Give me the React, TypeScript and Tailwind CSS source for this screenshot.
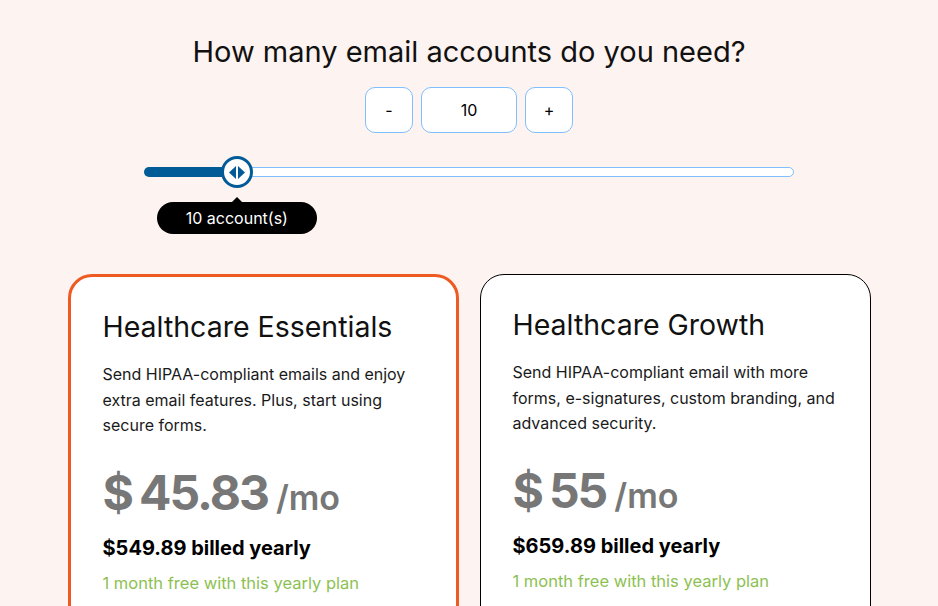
import { useState } from 'react';

const TITLE = 'How many email accounts do you need?';
const MIN_ACCOUNTS = 1;
const MAX_ACCOUNTS = 64;

const plans = [
  {
    id: 'essentials',
    name: 'Healthcare Essentials',
    description: 'Send HIPAA-compliant emails and enjoy extra email features. Plus, start using secure forms.',
    price: '45.83',
    yearly: '$549.89 billed yearly',
    featured: true,
  },
  {
    id: 'growth',
    name: 'Healthcare Growth',
    description: 'Send HIPAA-compliant email with more forms, e-signatures, custom branding, and advanced security.',
    price: '55',
    yearly: '$659.89 billed yearly',
    featured: false,
  },
];

function ThumbArrows() {
  return (
    <svg width="18" height="13" viewBox="0 0 18 13" fill="#005b96">
      <path d="M8 0 L8 13 L1 6.5 Z" />
      <path d="M10 0 L10 13 L17 6.5 Z" />
    </svg>
  );
}

function PlanCard({ plan }: { plan: (typeof plans)[number] }) {
  return (
    <div
      className={
        plan.featured
          ? 'rounded-[24px] border-[3px] border-[#ee5a22] bg-white p-8'
          : 'rounded-[24px] border border-black bg-white p-8'
      }
    >
      <h2 className="text-[28.5px] leading-[36px] text-[#111]">{plan.name}</h2>
      <p className="mt-[17px] text-[16px] leading-[25.5px] text-[#1a1a1a]">{plan.description}</p>
      <div className="mt-[29px] flex items-baseline text-[#777777]">
        <span className="mr-[5px] text-[48px] font-bold leading-[50px]">$</span>
        <span className="text-[48px] font-bold leading-[50px] tracking-[-2px]">{plan.price}</span>
        <span className="ml-[8px] text-[34px] font-semibold">/mo</span>
      </div>
      <p className="mt-[11px] text-[20px] font-bold leading-[28px] text-black">{plan.yearly}</p>
      <p className="mt-[9px] text-[16.5px] leading-[24px] text-[#8cc152]">1 month free with this yearly plan</p>
    </div>
  );
}

export default function App() {
  const [accounts, setAccounts] = useState<number>(10);
  const pct = ((accounts - MIN_ACCOUNTS) / (MAX_ACCOUNTS - MIN_ACCOUNTS)) * 100;

  return (
    <div className="min-h-[606px] w-full bg-[#fdf3f0] pt-[34px] font-['Inter',sans-serif]">
      <h1 className="text-center text-[29px] leading-[36px] text-[#111]">{TITLE}</h1>

      <div className="mt-[17px] flex justify-center gap-2">
        <button
          className="h-[46px] w-[48px] rounded-[10px] border border-[#80bfff] bg-white text-[16px] text-black"
          onClick={() => setAccounts(Math.max(MIN_ACCOUNTS, accounts - 1))}
        >
          -
        </button>
        <div className="flex h-[46px] w-[96px] items-center justify-center rounded-[10px] border border-[#80bfff] bg-white text-[16px] text-black">
          {accounts}
        </div>
        <button
          className="h-[46px] w-[48px] rounded-[10px] border border-[#80bfff] bg-white text-[16px] text-black"
          onClick={() => setAccounts(Math.min(MAX_ACCOUNTS, accounts + 1))}
        >
          +
        </button>
      </div>

      <div className="relative mx-auto mt-[23px] flex h-8 w-[650px] items-center">
        <div className="flex h-[10px] w-full">
          <div className="h-full rounded-l-full bg-[#005b96]" style={{ width: `${pct}%` }} />
          <div className="h-full flex-1 rounded-r-full border border-[#80bfff] bg-white" />
        </div>
        <div
          className="absolute top-0 flex h-8 w-8 -translate-x-1/2 items-center justify-center rounded-full border-[3px] border-[#005b96] bg-white"
          style={{ left: `${pct}%` }}
        >
          <ThumbArrows />
          <div className="absolute top-[43px] left-1/2 flex h-8 w-[160px] -translate-x-1/2 items-center justify-center rounded-full bg-black text-[16px] text-white">
            <span className="absolute -top-[5px] left-1/2 h-0 w-0 -translate-x-1/2 border-x-[6px] border-b-[6px] border-x-transparent border-b-black" />
            {accounts} account(s)
          </div>
        </div>
      </div>

      <div className="mx-auto mt-[86px] grid w-[803px] grid-cols-2 gap-[21px]">
        {plans.map((plan) => (
          <PlanCard key={plan.id} plan={plan} />
        ))}
      </div>
    </div>
  );
}
